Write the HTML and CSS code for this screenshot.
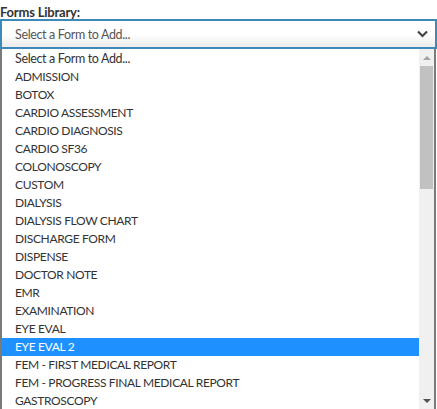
FILE: index.html
```html
<!DOCTYPE html>
<html lang="en">
  <head>
    <meta charset="UTF-8" />
    <title>Forms Library</title>
    <link rel="stylesheet" href="styles.css">
  </head>
  <body>
    <div class="forms-library">
      <label class="field-label">Forms Library:</label>
      <div class="select-box">
        <span>Select a Form to Add...</span>
        <svg class="chevron" width="11" height="8" viewBox="0 0 11 8">
          <path d="M1 1.5 L5.5 6 L10 1.5" fill="none" stroke="#444" stroke-width="2.2" />
        </svg>
      </div>
      <div class="dropdown">
        <ul class="options">
          <li>Select a Form to Add...</li>
          <li>ADMISSION</li>
          <li>BOTOX</li>
          <li>CARDIO ASSESSMENT</li>
          <li>CARDIO DIAGNOSIS</li>
          <li>CARDIO SF36</li>
          <li>COLONOSCOPY</li>
          <li>CUSTOM</li>
          <li>DIALYSIS</li>
          <li>DIALYSIS FLOW CHART</li>
          <li>DISCHARGE FORM</li>
          <li>DISPENSE</li>
          <li>DOCTOR NOTE</li>
          <li>EMR</li>
          <li>EXAMINATION</li>
          <li>EYE EVAL</li>
          <li class="selected">EYE EVAL 2</li>
          <li>FEM - FIRST MEDICAL REPORT</li>
          <li>FEM - PROGRESS FINAL MEDICAL REPORT</li>
          <li>GASTROSCOPY</li>
        </ul>
        <div class="scrollbar">
          <div class="arrow arrow-up"></div>
          <div class="thumb"></div>
          <div class="track"></div>
          <div class="arrow arrow-down"></div>
        </div>
      </div>
    </div>
  </body>
</html>
```

FILE: styles.css
```css
/* Basic Reset */
* {
  margin: 0;
  padding: 0;
  box-sizing: border-box;
}

body {
  font-family: "Lato", "Open Sans", sans-serif;
  font-size: 12px;
  letter-spacing: -0.35px;
  color: #333;
  background: #fff;
  overflow: hidden;
}

.forms-library {
  width: 437px;
}

.field-label {
  display: block;
  height: 19px;
  padding-top: 4px;
  font-weight: bold;
  font-size: 13px;
  letter-spacing: -0.2px;
  color: #333;
}

/* Closed select */
.select-box {
  display: flex;
  align-items: center;
  justify-content: space-between;
  height: 30px;
  padding: 0 7px 0 13px;
  border: 2px solid #3d8ab9;
  background: linear-gradient(to bottom, #fff 50%, #ececec 100%);
  font-size: 12.5px;
  color: #555;
}

/* Open list */
.dropdown {
  display: flex;
  height: 360px;
  margin-right: 1px;
  border-left: 2px solid #7a7a7a;
  border-right: 2px solid #7a7a7a;
  background: #fff;
}

.options {
  flex: 1;
  list-style: none;
  padding-top: 1px;
}

.options li {
  height: 18px;
  line-height: 18px;
  padding-left: 13px;
  white-space: nowrap;
  color: #333;
}

.options li:first-child {
  font-size: 12.5px;
}

.options li.selected {
  background-color: #1e90ff;
  color: #fff;
}

.scrollbar {
  display: flex;
  flex-direction: column;
  width: 15px;
  background-color: #f0f0f0;
}

.arrow {
  height: 17px;
  display: flex;
  align-items: center;
  justify-content: center;
}

.arrow::before {
  content: "";
  border-left: 4px solid transparent;
  border-right: 4px solid transparent;
}

.arrow-up::before {
  border-bottom: 4px solid #a3a3a3;
}

.arrow-down::before {
  border-top: 4px solid #505050;
}

.thumb {
  height: 123px;
  margin: 0 1px;
  background-color: #c1c1c1;
}

.track {
  flex: 1;
}
```
